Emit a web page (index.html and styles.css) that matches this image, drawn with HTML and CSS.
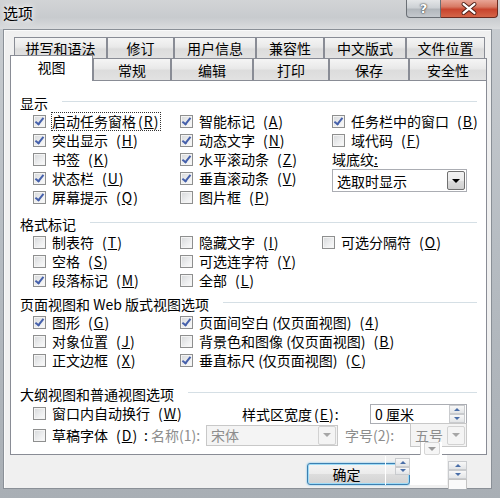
FILE: index.html
```html
<!DOCTYPE html>
<html lang="zh-CN">
<head>
  <meta charset="UTF-8" />
  <title>选项</title>
  <link rel="stylesheet" href="styles.css">
</head>
<body>

  <div class="window">
    <div class="titlebar">
      <span class="title">选项</span>
      <span class="cap-btn help">?</span>
      <span class="cap-btn close">
        <svg width="57" height="18" viewBox="0 0 57 18">
          <path d="M23 4 L34 13 M34 4 L23 13" stroke="#4b1c14" stroke-width="4.2" stroke-linecap="round" fill="none"/>
          <path d="M23 4 L34 13 M34 4 L23 13" stroke="#fff" stroke-width="2.4" stroke-linecap="round" fill="none"/>
        </svg>
      </span>
    </div>

    <div class="frame">
      <div class="client">
        <div class="tab-row back">
          <div class="tab">拼写和语法</div>
          <div class="tab">修订</div>
          <div class="tab">用户信息</div>
          <div class="tab">兼容性</div>
          <div class="tab">中文版式</div>
          <div class="tab">文件位置</div>
        </div>
        <div class="tab-row front">
          <div class="tab on">视图</div>
          <div class="tab">常规</div>
          <div class="tab">编辑</div>
          <div class="tab">打印</div>
          <div class="tab">保存</div>
          <div class="tab">安全性</div>
        </div>

        <div class="panel">
          <section class="group">
            <div class="group-head">显示</div>
            <div class="opts show">
              <label class="chk"><span class="box on"></span><span class="focus">启动任务窗格<span class="k">(<u>R</u>)</span></span></label>
              <label class="chk"><span class="box on"></span>智能标记<span class="k">(<u>A</u>)</span></label>
              <label class="chk"><span class="box on"></span>任务栏中的窗口<span class="k">(<u>B</u>)</span></label>

              <label class="chk"><span class="box on"></span>突出显示<span class="k">(<u>H</u>)</span></label>
              <label class="chk"><span class="box on"></span>动态文字<span class="k">(<u>N</u>)</span></label>
              <label class="chk"><span class="box"></span>域代码<span class="k">(<u>F</u>)</span></label>

              <label class="chk"><span class="box"></span>书签<span class="k">(<u>K</u>)</span></label>
              <label class="chk"><span class="box on"></span>水平滚动条<span class="k">(<u>Z</u>)</span></label>
              <span class="field-label">域底纹<u>:</u></span>

              <label class="chk"><span class="box on"></span>状态栏<span class="k">(<u>U</u>)</span></label>
              <label class="chk"><span class="box on"></span>垂直滚动条<span class="k">(<u>V</u>)</span></label>
              <div class="combo shading">
                <span>选取时显示</span>
                <span class="drop"></span>
              </div>

              <label class="chk"><span class="box on"></span>屏幕提示<span class="k">(<u>Q</u>)</span></label>
              <label class="chk"><span class="box"></span>图片框<span class="k">(<u>P</u>)</span></label>
            </div>
          </section>

          <section class="group marks-group">
            <div class="group-head">格式标记</div>
            <div class="opts marks">
              <label class="chk"><span class="box"></span>制表符<span class="k">(<u>T</u>)</span></label>
              <label class="chk"><span class="box"></span>隐藏文字<span class="k">(<u>I</u>)</span></label>
              <label class="chk"><span class="box"></span>可选分隔符<span class="k">(<u>O</u>)</span></label>

              <label class="chk"><span class="box"></span>空格<span class="k">(<u>S</u>)</span></label>
              <label class="chk"><span class="box"></span>可选连字符<span class="k">(<u>Y</u>)</span></label>
              <span></span>

              <label class="chk"><span class="box on"></span>段落标记<span class="k">(<u>M</u>)</span></label>
              <label class="chk"><span class="box"></span>全部<span class="k">(<u>L</u>)</span></label>
            </div>
          </section>

          <section class="group page-group">
            <div class="group-head">页面视图和 Web 版式视图选项</div>
            <div class="opts page">
              <label class="chk"><span class="box on"></span>图形<span class="k">(<u>G</u>)</span></label>
              <label class="chk"><span class="box on"></span>页面间空白 (仅页面视图)<span class="k">(<u>4</u>)</span></label>

              <label class="chk"><span class="box"></span>对象位置<span class="k">(<u>J</u>)</span></label>
              <label class="chk"><span class="box"></span>背景色和图像 (仅页面视图)<span class="k">(<u>B</u>)</span></label>

              <label class="chk"><span class="box"></span>正文边框<span class="k">(<u>X</u>)</span></label>
              <label class="chk"><span class="box on"></span>垂直标尺 (仅页面视图)<span class="k">(<u>C</u>)</span></label>
            </div>
          </section>

          <section class="group outline-group">
            <div class="group-head">大纲视图和普通视图选项</div>
            <div class="outline-row first">
              <label class="chk wrap"><span class="box"></span>窗口内自动换行<span class="k">(<u>W</u>)</span></label>
              <span class="width-label">样式区宽度<span class="k">(<u>E</u>)</span>:</span>
              <div class="spin-box">
                <span>0 厘米</span>
                <span class="spin"><span class="up"></span><span class="dn"></span></span>
              </div>
            </div>
            <div class="outline-row second">
              <div class="draft-part">
                <label class="chk"><span class="box"></span>草稿字体<span class="k">(<u>D</u>)</span>:</label>
                <span class="muted name-label">名称(1):</span>
              </div>
              <div class="combo off font-name">
                <span>宋体</span>
                <span class="drop"></span>
              </div>
              <span class="muted size-label">字号(2):</span>
              <div class="combo off font-size">
                <span>五号</span>
                <span class="drop"></span>
              </div>
            </div>
          </section>
        </div>

        <div class="footer">
          <button type="button" class="ok-button">确定</button>
        </div>

        <!-- leftover paint from the controls underneath -->
        <span class="ghost ghost-drop"><span class="drop"></span></span>
        <span class="ghost ghost-white"></span>
        <span class="ghost ghost-line"></span>
        <span class="ghost ghost-spin spin"><span class="up"></span><span class="dn"></span></span>
        <span class="ghost ghost-spin2 spin"><span class="up"></span><span class="dn"></span></span>
        <span class="ghost ghost-box"></span>
      </div>
    </div>
  </div>

</body>
</html>
```

FILE: styles.css
```css
* {
  box-sizing: border-box;
}

body {
  margin: 0;
  font-family: "Noto Sans CJK SC", "Noto Sans", sans-serif;
  font-size: 14px;
  color: #000;
}

.window {
  width: 500px;
  height: 498px;
  display: flex;
  flex-direction: column;
  background: linear-gradient(#c9cdd1, #b6bcc2 50%, #a9afb5);
}

/* title bar */
.titlebar {
  height: 29px;
  flex: none;
  display: flex;
  align-items: flex-start;
  padding-right: 2px;
  background: linear-gradient(#d2d4d6, #c8cbce 60%, #dadcde);
}

.title {
  margin: 4px 0 0 3px;
  font-size: 15px;
  line-height: 17px;
  text-shadow: 0 0 5px #fff, 0 0 8px #fff;
}

.cap-btn {
  height: 18px;
  display: flex;
  align-items: center;
  justify-content: center;
}

.help {
  width: 35px;
  margin-left: auto;
  border: 1px solid #6a6f75;
  border-top: none;
  border-radius: 0 0 0 4px;
  background: linear-gradient(#e4e6e8, #cdd1d5 45%, #b2b7bc 55%, #c4c8cd);
  color: #fff;
  font: bold 13px "DejaVu Sans", sans-serif;
  text-shadow: 0 0 2px #333, 0 0 1px #222;
}

.close {
  width: 57px;
  border: 1px solid #6b2b20;
  border-top: none;
  border-left: none;
  border-radius: 0 0 4px 0;
  background: linear-gradient(#e9a596, #d87a64 40%, #c8442d 55%, #d46548);
}

/* window body */
.frame {
  flex: 1;
  padding: 0 8px 9px 3px;
}

.client {
  position: relative;
  height: 100%;
  padding-top: 7px;
  background: #f0f0f0;
  border: 1px solid #8a9097;
  box-shadow: inset 1px 1px 0 #fafafa;
}

/* tabs */
.tab-row {
  display: flex;
}

.tab-row.back {
  margin-left: 10px;
  height: 21px;
}

.tab-row.front {
  margin-left: 6px;
  height: 22px;
  align-items: flex-end;
}

.tab {
  height: 100%;
  display: flex;
  align-items: center;
  justify-content: center;
  line-height: 1;
  border: 1px solid #898c95;
  border-bottom: none;
  background: linear-gradient(#f5f5f5, #e9e9e9 45%, #dcdcdc 55%, #e2e2e2);
}

.back .tab:nth-child(1) { width: 93px; }
.back .tab:nth-child(2) { width: 67px; }
.back .tab:nth-child(3) { width: 82px; }
.back .tab:nth-child(4) { width: 68px; }
.back .tab:nth-child(5) { width: 82px; }
.back .tab:nth-child(6) { width: 79px; }

.front .tab:nth-child(1) { width: 83px; }
.front .tab:nth-child(2) { width: 78px; }
.front .tab:nth-child(3) { width: 82px; }
.front .tab:nth-child(4) { width: 76px; }
.front .tab:nth-child(5) { width: 80px; }
.front .tab:nth-child(6) { width: 78px; }

.tab.on {
  height: 26px;
  margin-bottom: -1px;
  padding-bottom: 3px;
  background: #fff;
  position: relative;
  z-index: 2;
}

.panel {
  margin-left: 6px;
  width: 477px;
  height: 375px;
  padding: 14px 9px 0;
  background: #fff;
  border: 1px solid #898c95;
}

/* groups */
.group-head {
  display: flex;
  align-items: center;
  height: 16px;
  margin-bottom: 1px;
  line-height: 16px;
  white-space: nowrap;
}

.group-head::after {
  content: "";
  flex: 1;
  height: 1px;
  margin: -3px 0 0 14px;
  background: #d5dfe5;
}

.marks-group {
  margin-top: 9px;
}

.page-group {
  margin-top: 6px;
}

.outline-group {
  margin-top: 16px;
}

.opts {
  display: grid;
  grid-auto-rows: 19px;
  align-items: center;
  padding-left: 13px;
}

.opts.show {
  grid-template-columns: 147px 152px 1fr;
}

.opts.marks {
  grid-template-columns: 147px 142px 1fr;
}

.opts.page {
  grid-template-columns: 147px 1fr;
}

/* check boxes */
.chk {
  display: flex;
  align-items: center;
  gap: 6px;
  height: 19px;
  line-height: 17px;
  white-space: nowrap;
}

.box {
  width: 13px;
  height: 13px;
  flex: none;
  display: flex;
  align-items: center;
  justify-content: center;
  border: 1px solid #8e8f8f;
  background: linear-gradient(135deg, #d6d8da, #eeeff0 60%, #fbfbfb);
  box-shadow: inset 0 0 0 1px #f4f4f4;
}

.box.on::after {
  content: "";
  width: 3px;
  height: 7px;
  margin-top: -2px;
  border: solid #4560ab;
  border-width: 0 2px 2px 0;
  transform: rotate(38deg);
}

.k {
  margin-left: 2px;
  letter-spacing: 1px;
}

.focus {
  outline: 1px dotted #333;
  padding-right: 1px;
}

.field-label {
  line-height: 17px;
}

/* combo boxes */
.combo {
  display: flex;
  align-items: center;
  height: 23px;
  padding-left: 4px;
  background: #fff;
  border: 1px solid #abadb3;
  white-space: nowrap;
}

.combo.shading {
  grid-column: 3;
  grid-row: 4 / span 2;
  align-self: start;
  width: 135px;
}

.drop {
  width: 18px;
  height: 19px;
  margin: 0 1px 0 auto;
  flex: none;
  display: flex;
  align-items: center;
  justify-content: center;
  border: 1px solid #707070;
  border-radius: 2px;
  background: linear-gradient(#f2f2f2, #ebebeb 50%, #dddddd 51%, #cfcfcf);
}

.drop::after {
  content: "";
  width: 0;
  height: 0;
  border-left: 4px solid transparent;
  border-right: 4px solid transparent;
  border-top: 4px solid #000;
}

.combo.off {
  color: #8d8d8d;
  background: #f4f4f4;
  border-color: #c8c8c8;
}

.combo.off .drop {
  border-color: #d2d2d2;
  background: #f4f4f4;
}

.combo.off .drop::after {
  border-top-color: #a6a6a6;
}

/* outline / normal view options */
.outline-row {
  display: flex;
  align-items: center;
  padding-left: 13px;
  white-space: nowrap;
}

.outline-row.first {
  height: 21px;
}

.outline-row.second {
  height: 22px;
}

.chk.wrap {
  width: 209px;
}

.width-label {
  width: 128px;
}

.spin-box {
  width: 97px;
  height: 20px;
  display: flex;
  align-items: center;
  padding-left: 4px;
  background: #fff;
  border: 1px solid #abadb3;
}

.spin {
  width: 16px;
  height: 18px;
  margin-left: auto;
  display: flex;
  flex-direction: column;
}

.spin-box .spin {
  margin-right: 1px;
}

.spin span {
  flex: 1;
  display: flex;
  align-items: center;
  justify-content: center;
  border: 1px solid #c9cbce;
  background: linear-gradient(#f8f8f8, #e3e5e7);
}

.spin .up::after,
.spin .dn::after {
  content: "";
  width: 0;
  height: 0;
  border-left: 3px solid transparent;
  border-right: 3px solid transparent;
}

.spin .up::after {
  border-bottom: 3px solid #4a6ea8;
}

.spin .dn::after {
  border-top: 3px solid #4a6ea8;
}

.draft-part {
  width: 173px;
  flex: none;
  display: flex;
  align-items: center;
  gap: 3px;
}

.muted {
  color: #8d8d8d;
}

.name-label {
  line-height: 17px;
}

.combo.font-name {
  width: 132px;
  height: 21px;
}

.size-label {
  width: 72px;
  padding-left: 7px;
}

.combo.font-size {
  width: 57px;
  height: 24px;
}

/* footer buttons */
.footer {
  padding: 8px 0 0 303px;
}

.ok-button {
  width: 103px;
  height: 22px;
  padding: 0 24px 0 0;
  font: inherit;
  line-height: 18px;
  color: #000;
  border: 1px solid #3c7fb1;
  border-radius: 3px;
  background: linear-gradient(#f4f4f4, #ebebeb 50%, #dddddd 51%, #d2d2d2);
  box-shadow: inset 0 0 0 1px #9fdcf7, 0 0 2px #54b8ea;
}

/* ghost paint */
.ghost {
  position: absolute;
}

.ghost-drop {
  left: 416px;
  top: 412px;
  width: 22px;
  height: 15px;
  display: flex;
  background: #fff;
  border-left: 1px solid #c8c8c8;
  border-bottom: 1px solid #c8c8c8;
}

.ghost-drop .drop {
  margin: 0 auto;
  width: 16px;
  height: 13px;
  border-color: #d6d6d6;
  background: #f6f6f6;
}

.ghost-drop .drop::after {
  border-top-color: #9a9a9a;
}

.ghost-white {
  left: 406px;
  top: 425px;
  width: 37px;
  height: 30px;
  background: #fff;
}

.ghost-line {
  left: 381px;
  top: 426px;
  width: 1px;
  height: 29px;
  background: #fff;
}

.ghost-spin {
  left: 391px;
  top: 428px;
  width: 15px;
  height: 17px;
}

.ghost-spin2 {
  left: 444px;
  top: 431px;
  width: 19px;
  height: 18px;
}

.ghost-box {
  left: 444px;
  top: 449px;
  width: 19px;
  height: 10px;
  border: 1px solid #c4c4c4;
  border-bottom: none;
  background: #fafafa;
}
```
